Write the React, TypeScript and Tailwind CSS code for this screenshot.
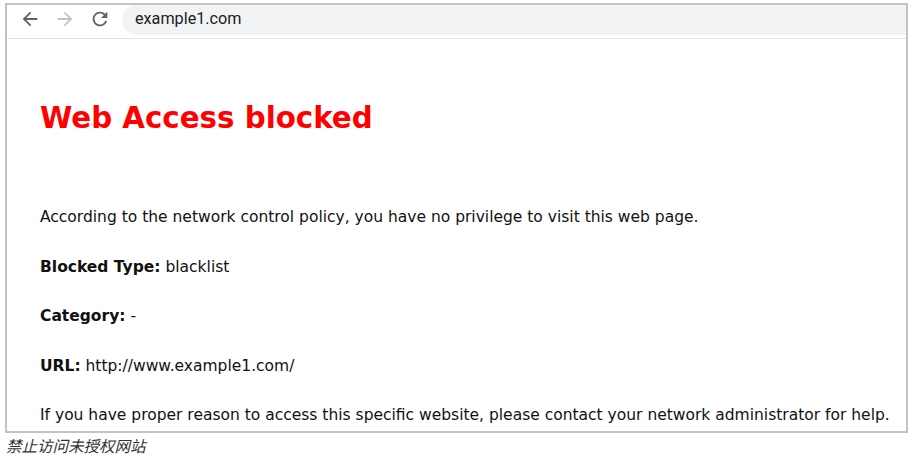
import React from "react";

export default function App() {
  return (
    <div className="w-[914px] h-[459px] bg-white relative overflow-hidden">
      <div className="ml-[5px] mt-[3px] w-[903px] h-[430px] border-2 border-[#c3c3c3] flex flex-col overflow-hidden">
        <div className="h-[34px] flex items-stretch border-b border-[#e3e3e3] shrink-0">
          <div className="flex items-start pt-[3px] pl-[12px] w-[115px] gap-[13px]">
            <svg width="22" height="22" viewBox="0 0 24 24" fill="#5f6368">
              <path d="M20 11H7.83l5.59-5.59L12 4l-8 8 8 8 1.41-1.41L7.83 13H20v-2z" />
            </svg>
            <svg width="22" height="22" viewBox="0 0 24 24" fill="#c4c4c4">
              <path d="M12 4l-1.41 1.41L16.17 11H4v2h12.17l-5.58 5.59L12 20l8-8z" />
            </svg>
            <svg width="22" height="22" viewBox="0 0 24 24" fill="#5f6368">
              <path d="M17.65 6.35A7.958 7.958 0 0 0 12 4c-4.42 0-7.99 3.58-7.99 8s3.57 8 7.99 8c3.73 0 6.84-2.55 7.73-6h-2.08A5.99 5.99 0 0 1 12 18c-3.31 0-6-2.69-6-6s2.69-6 6-6c1.66 0 3.14.69 4.22 1.78L13 11h7V4l-2.35 2.35z" />
            </svg>
          </div>
          <div className="flex-1 bg-[#f1f3f4] rounded-l-full mt-[0px] mb-[3px] flex items-start pt-[3px] pl-[13px]">
            <span className="text-[16.2px] leading-[22px] text-[#202124]" style={{ fontFamily: "Roboto, 'Open Sans', sans-serif" }}>
              example1.com
            </span>
          </div>
        </div>
        <div
          className="flex-1 pl-[33px] pt-[61px] text-[#111]"
          style={{ fontFamily: "Verdana, 'DejaVu Sans', sans-serif" }}
        >
          <h1 className="text-[29.3px] leading-[36px] font-bold text-[#ff0000]">Web Access blocked</h1>
          <div className="mt-[72px] flex flex-col gap-[30.5px] text-[15.5px] leading-[19px]">
            <p>According to the network control policy, you have no privilege to visit this web page.</p>
            <p>
              <b>Blocked Type:</b> blacklist
            </p>
            <p>
              <b>Category:</b> -
            </p>
            <p>
              <b>URL:</b> http://www.example1.com/
            </p>
            <p>If you have proper reason to access this specific website, please contact your network administrator for help.</p>
          </div>
        </div>
      </div>
      <div
        className="pl-[6px] pt-[1px] text-[15.5px] italic text-[#333]"
        style={{ fontFamily: "'Noto Sans CJK SC', sans-serif" }}
      >
        禁止访问未授权网站
      </div>
    </div>
  );
}
